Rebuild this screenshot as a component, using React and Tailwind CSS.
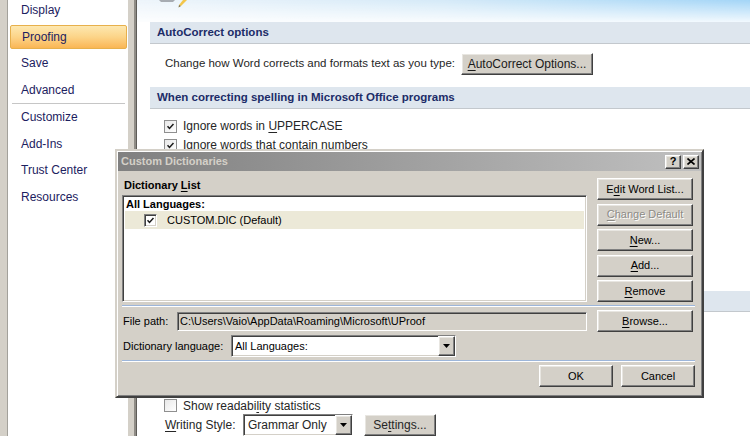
import React from 'react';

const Check = ({ className = '' }) => (
  <svg viewBox="0 0 13 13" className={className}>
    <path d="M3 6.3 L5.3 8.8 L10 3.6" fill="none" stroke="#1a1a1a" strokeWidth="1.8" />
  </svg>
);

// Word 2007 style checkbox
const OfficeBox = ({ checked }) => (
  <div className="w-[13px] h-[13px] shrink-0 border border-[#8f8f8f] bg-gradient-to-br from-[#e8e8e8] to-white">
    {checked && <Check className="w-[11px] h-[11px]" />}
  </div>
);

// Windows classic checkbox
const ClassicBox = ({ checked }) => (
  <div className="w-[13px] h-[13px] shrink-0 bg-white border border-t-[#808080] border-l-[#808080] border-r-white border-b-white shadow-[inset_1px_1px_0_#404040,inset_-1px_-1px_0_#d4d0c8]">
    {checked && <Check className="w-[11px] h-[11px]" />}
  </div>
);

const bevel =
  'border border-t-white border-l-white border-r-[#404040] border-b-[#404040] shadow-[inset_-1px_-1px_0_#808080,inset_1px_1px_0_#e8e6e1] bg-[#d4d0c8]';
const sunken =
  'border border-t-[#808080] border-l-[#808080] border-r-white border-b-white shadow-[inset_1px_1px_0_#404040,inset_-1px_-1px_0_#d4d0c8]';

const Btn = ({ children, className = '', disabled }) => (
  <div
    className={`h-[22px] flex items-center justify-center text-[11px] ${bevel} ${
      disabled ? 'text-[#8d8b86] [text-shadow:1px_1px_0_#ffffff]' : 'text-black'
    } ${className}`}
  >
    {children}
  </div>
);

const U = ({ children }) => <span className="underline underline-offset-2">{children}</span>;

const Arrow = () => (
  <div className={`w-[17px] h-full flex items-center justify-center ${bevel}`}>
    <svg viewBox="0 0 7 4" className="w-[7px] h-[4px]">
      <path d="M0 0 H7 L3.5 4 Z" fill="#000" />
    </svg>
  </div>
);

const sideItems = [
  { label: 'Display' },
  { label: 'Proofing', active: true },
  { label: 'Save' },
  { label: 'Advanced' },
  { sep: true },
  { label: 'Customize' },
  { label: 'Add-Ins' },
  { label: 'Trust Center' },
  { label: 'Resources' },
];

const Band = ({ children }) => (
  <div className="ml-[13px] h-[22px] flex items-center pl-[7px] bg-[#dee6ee] border-b border-[#c3c8cd] text-[11.5px] font-bold text-[#1c2c68]">
    {children}
  </div>
);

const OptRow = ({ checked, children }) => (
  <div className="h-[19px] flex items-center gap-[6px] pl-[27px] text-[12px] text-[#262626]">
    <OfficeBox checked={checked} />
    <span>{children}</span>
  </div>
);

export default function App() {
  return (
    <div className="relative w-[750px] h-[436px] overflow-hidden flex bg-white font-['Liberation_Sans',Arial,sans-serif]">
      {/* window frame */}
      <div className="w-[8px] shrink-0 bg-[#d4d0c8] border-r border-[#a3a19b]" />

      {/* sidebar */}
      <div className="w-[120px] shrink-0 bg-white">
        <div className="-mt-[3px] pl-[2px] pr-[1px]">
          {sideItems.map((it, i) =>
            it.sep ? (
              <div key={i} className="h-px mx-[2px] bg-[#c6c6c6]" />
            ) : (
              <div key={i} className="h-[26.5px] flex items-center">
                <div
                  className={`w-full h-[24px] flex items-center pl-[11px] text-[12px] text-[#1c2160] ${
                    it.active
                      ? 'rounded-[2px] border border-[#e7b04c] bg-gradient-to-b from-[#fde8b0] via-[#fcd488] to-[#fab654]'
                      : ''
                  }`}
                >
                  {it.label}
                </div>
              </div>
            )
          )}
        </div>
      </div>

      {/* splitter */}
      <div className="w-[9px] shrink-0 flex">
        <div className="w-[6px] bg-[#d4d0c8]" />
        <div className="w-[2px] bg-[#8f8c86]" />
        <div className="w-px bg-[#5e5c58]" />
      </div>

      {/* content */}
      <div className="flex-1 flex flex-col">
        <div className="relative h-[23px] bg-[linear-gradient(to_bottom,rgba(255,255,255,0)_0%,rgba(255,255,255,0.85)_100%),linear-gradient(to_right,#eef5fb_0%,#d5eaf8_50%,#a3d5f7_100%)]">
          <svg viewBox="0 0 30 8" className="absolute left-[22px] top-0 w-[30px] h-[8px]">
            <path d="M0 0 H16 L14 2 H2 Z" fill="#a7acb2" />
            <path d="M24 0 L28 0 L22 6 L20 5 Z" fill="#f2c64c" />
            <path d="M20 5 L22 6 L19.5 7.5 Z" fill="#7a6a3a" />
          </svg>
        </div>

        <Band>AutoCorrect options</Band>
        <div className="h-[44px] pt-[9px] pl-[28px]">
          <div className="h-[22px] flex items-center">
            <span className="w-[296px] text-[11.5px] text-[#262626] whitespace-nowrap">
              Change how Word corrects and formats text as you type:
            </span>
            <div className={`w-[132px] h-[22px] flex items-center justify-center text-[12px] text-[#1a1a1a] ${bevel}`}>
              <U>A</U>utoCorrect Options...
            </div>
          </div>
        </div>

        <Band>When correcting spelling in Microsoft Office programs</Band>
        <div className="pt-[8px]">
          <OptRow checked>
            Ignore words in <U>U</U>PPERCASE
          </OptRow>
          <OptRow checked>Ignore words that contain num<U>b</U>ers</OptRow>
          {/* rows hidden behind the dialog */}
          <div className="h-[136px]" />
        </div>

        <Band />
        <div className="pt-[8px]">
          <div className="h-[76px]" />
          <OptRow>
            Show readabi<U>l</U>ity statistics
          </OptRow>
          <div className="-mt-[1px] h-[22px] flex items-center pl-[28px] text-[12px] text-[#262626]">
            <span className="w-[78px]">
              <U>W</U>riting Style:
            </span>
            <div className={`w-[110px] h-[22px] flex bg-white ${sunken}`}>
              <div className="flex-1 flex items-center pl-[4px]">Grammar Only</div>
              <Arrow />
            </div>
            <div className={`ml-[11px] w-[72px] h-[22px] flex items-center justify-center ${bevel}`}>
              Se<U>t</U>tings...
            </div>
          </div>
        </div>
      </div>

      {/* Custom Dictionaries dialog */}
      <div className="absolute left-[115px] top-[149px] w-[589px] h-[249px] flex flex-col bg-[#d4d0c8] border-2 border-t-[#d4d0c8] border-l-[#d4d0c8] border-r-[#404040] border-b-[#404040] shadow-[inset_1px_1px_0_#ffffff,inset_-1px_-1px_0_#808080] text-[11px] text-black">
        <div className="mx-px mt-px h-[19px] flex items-center justify-between pl-[3px] pr-[2px] bg-gradient-to-r from-[#808080] to-[#c0c0c0]">
          <span className="font-bold text-[#d4d0c8]">Custom Dictionaries</span>
          <div className="flex gap-[2px]">
            <div className={`w-[16px] h-[14px] flex items-center justify-center font-bold text-[11px] leading-none ${bevel}`}>?</div>
            <div className={`w-[16px] h-[14px] flex items-center justify-center ${bevel}`}>
              <svg viewBox="0 0 8 7" className="w-[8px] h-[7px]">
                <path d="M0.5 0.5 L7.5 6.5 M7.5 0.5 L0.5 6.5" stroke="#000" strokeWidth="1.6" />
              </svg>
            </div>
          </div>
        </div>

        <div className="pl-[5px] pr-[7px] pt-[7px]">
          <div className="grid grid-cols-[465px_96px] gap-x-[10px]">
            <div>
              <div className="h-[17px] pl-[2px] font-bold leading-[14px]">
                Dictionary <U>L</U>ist
              </div>
              <div className={`h-[107px] bg-white pt-px ${sunken}`}>
                <div className="h-[14px] pl-[3px] font-bold leading-[14px]">All Languages:</div>
                <div className="mx-[2px] h-[18px] flex items-center bg-[#ece9d8] pl-[19px]">
                  <ClassicBox checked />
                  <span className="ml-[10px]">CUSTOM.DIC (Default)</span>
                </div>
              </div>
            </div>
            <div className="flex flex-col gap-[3.5px]">
              <Btn>
                E<U>d</U>it Word List...
              </Btn>
              <Btn disabled>
                <U>C</U>hange Default
              </Btn>
              <Btn>
                <U>N</U>ew...
              </Btn>
              <Btn>
                <U>A</U>dd...
              </Btn>
              <Btn>
                <U>R</U>emove
              </Btn>
            </div>
          </div>

          <div className="mt-[3px] h-px bg-[#9db6da]" />
          <div className="h-px bg-white" />

          <div className="mt-[3px] grid grid-cols-[465px_96px] gap-x-[10px] h-[22px]">
            <div className="flex items-center">
              <span className="w-[55px] pl-[1px]">File path:</span>
              <div className={`flex-1 h-[19px] flex items-center pl-[2px] bg-[#d4d0c8] whitespace-nowrap overflow-hidden ${sunken}`}>
                C:\Users\Vaio\AppData\Roaming\Microsoft\UProof
              </div>
            </div>
            <Btn>
              <U>B</U>rowse...
            </Btn>
          </div>

          <div className="mt-[3px] h-[22px] flex items-center">
            <span className="w-[109px] pl-[1px] whitespace-nowrap">Dictionary language:</span>
            <div className={`w-[225px] h-[22px] flex bg-white ${sunken}`}>
              <div className="flex-1 flex items-center pl-[3px]">All Languages:</div>
              <Arrow />
            </div>
          </div>

          <div className="mt-[3px] h-px bg-[#9db6da]" />
          <div className="h-px bg-white" />

          <div className="mt-[3px] flex justify-end gap-[8px]">
            <Btn className="w-[74px]">OK</Btn>
            <Btn className="w-[74px]">Cancel</Btn>
          </div>
        </div>
      </div>
    </div>
  );
}
